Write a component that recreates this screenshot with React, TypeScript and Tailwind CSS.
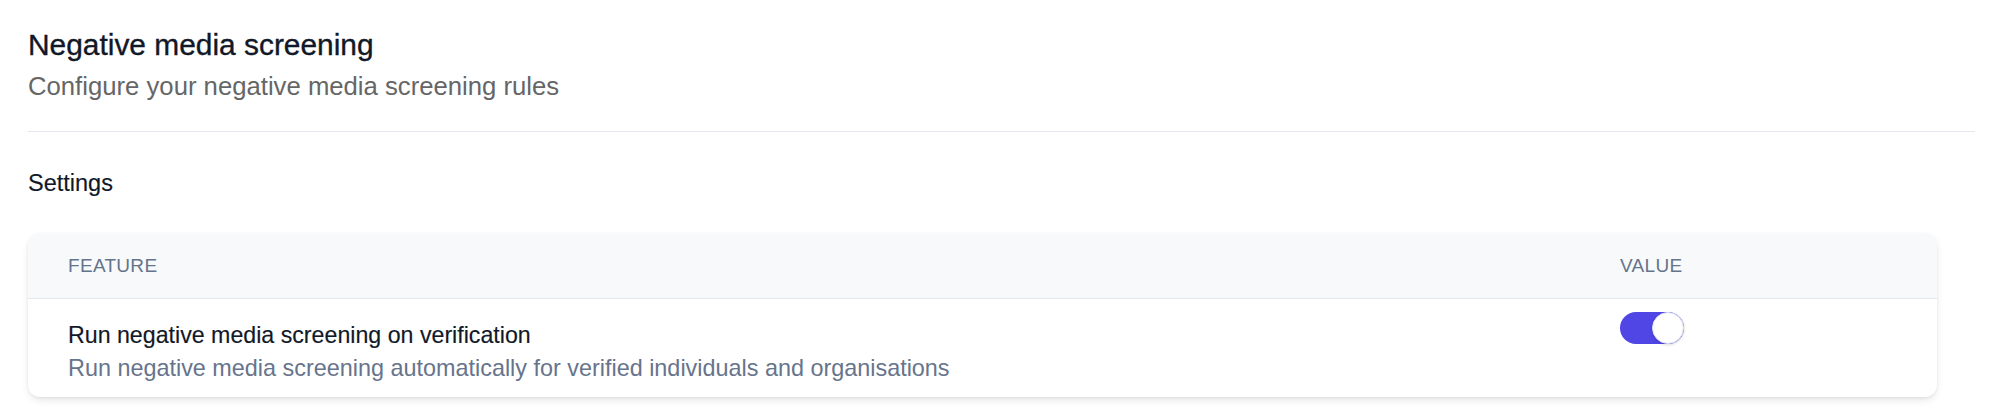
import React from 'react';

const Toggle = ({ on }: { on: boolean }) => (
  <div
    className={`relative h-[32px] w-[64px] rounded-full ${on ? 'bg-[#4f46e5]' : 'bg-[#e5e7eb]'}`}
  >
    <span
      className={`absolute top-0 h-[32px] w-[32px] rounded-full border border-[#dcdcf0] bg-white shadow-[0_1px_3px_rgba(0,0,0,0.15)] ${on ? 'right-0' : 'left-0'}`}
    />
  </div>
);

const App = () => {
  const settings = [
    {
      title: 'Run negative media screening on verification',
      description: 'Run negative media screening automatically for verified individuals and organisations',
      value: true,
    },
  ];

  return (
    <div className="min-h-[420px] bg-white pl-[28px] pr-[21px] pt-[28px] font-['Liberation_Sans',Arial,sans-serif]">
      <h1 className="text-[29.9px] leading-[34px] text-[#111827] [-webkit-text-stroke:0.35px_#111827]">
        Negative media screening
      </h1>
      <p className="mt-2 text-[25.7px] leading-[32px] text-[#666666]">
        Configure your negative media screening rules
      </p>

      <div className="mt-[29px] h-px bg-[#e6e7ee]" />

      <h2 className="mt-[37px] text-[23.5px] leading-[28px] text-[#111827] [-webkit-text-stroke:0.15px_#111827]">
        Settings
      </h2>

      <div className="mr-[38px] mt-[36px] overflow-hidden rounded-xl bg-white shadow-[0_4px_10px_-2px_rgba(0,0,0,0.12),0_1px_3px_rgba(0,0,0,0.06)]">
        <div className="flex border-b border-[#e4e6f0] bg-[#f8f9fb] pb-[20px] pt-[21px] text-[19px] uppercase leading-[24px] tracking-[0.3px] text-[#64748b]">
          <div className="flex-1 pl-10">Feature</div>
          <div className="w-[317px]">Value</div>
        </div>

        {settings.map((item, index) => (
          <div key={index} className="flex">
            <div className="flex-1 pb-[13px] pl-10 pt-[20px]">
              <div className="text-[23.2px] leading-[32px] text-[#111827] [-webkit-text-stroke:0.15px_#111827]">
                {item.title}
              </div>
              <div className="mt-px text-[23.4px] leading-[32px] text-[#67748b]">{item.description}</div>
            </div>
            <div className="w-[317px] pt-[13px]">
              <Toggle on={item.value} />
            </div>
          </div>
        ))}
      </div>
    </div>
  );
};

export default App;
